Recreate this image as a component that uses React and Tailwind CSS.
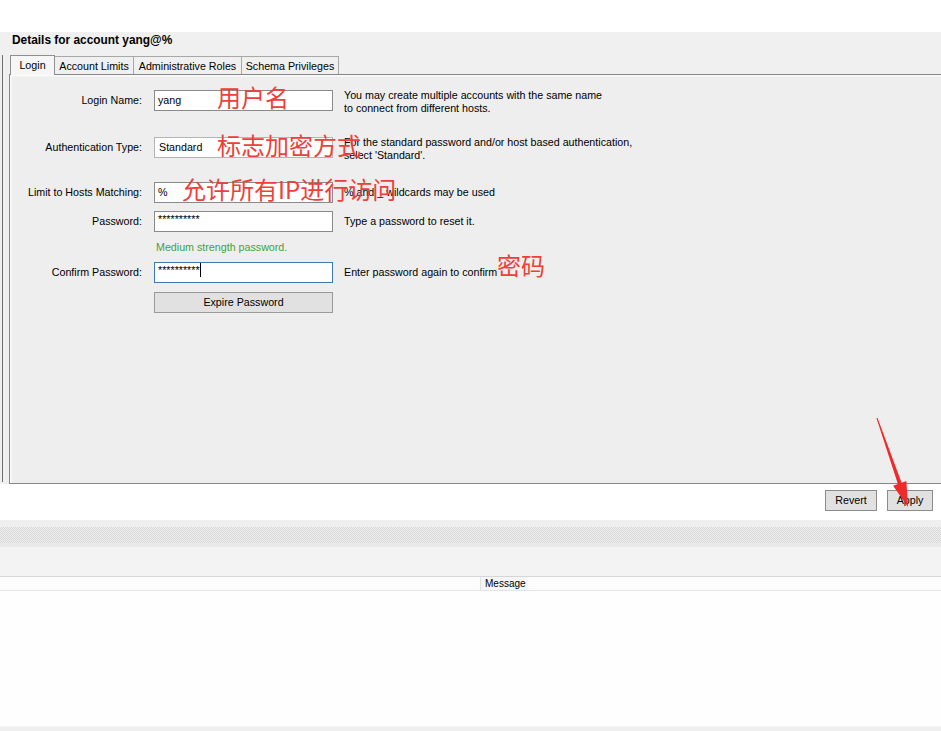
import React from 'react';

const INPUT_BOX = 'ml-[12px] w-[179px] h-[21px] border bg-white px-[3px] flex items-center shrink-0';

function Label({ children }) {
  return <div className="w-[132px] h-[21px] flex items-center justify-end shrink-0">{children}</div>;
}

function Tab({ label, active, width }) {
  if (active) {
    return (
      <div className={`relative z-10 h-[20px] mb-[-1px] ${width} border-t border-l border-r border-[#8f8f8f] bg-[#f6f6f6] flex items-center justify-center`}>
        {label}
      </div>
    );
  }
  return (
    <div className={`h-[18px] ${width} border-t border-r border-[#a8a8a8] bg-[#f0f0f0] flex items-center justify-center pt-px`}>
      {label}
    </div>
  );
}

export default function App() {
  return (
    <div className="relative w-[941px] h-[731px] overflow-hidden bg-white text-[10.7px] text-black font-['Liberation_Sans',Arial,sans-serif] leading-[13px]">
      <div className="h-[32px]" />

      {/* details panel */}
      <div className="h-[452px] bg-[#f0f0f0] flex flex-col">
        <div className="h-[23px] pl-[12px] pt-px font-bold text-[11.9px] leading-[14px]">Details for account yang@%</div>
        <div className="flex flex-1 min-h-0">
          <div className="w-[9px] pl-[2px] pb-[2px]">
            <div className="h-full border-l border-[#6f6f6f]" />
          </div>
          <div className="flex-1 flex flex-col">
            <div className="h-[19px] flex items-end pl-px">
              <Tab label="Login" active width="w-[45px]" />
              <Tab label="Account Limits" width="w-[79px]" />
              <Tab label="Administrative Roles" width="w-[108px]" />
              <Tab label="Schema Privileges" width="w-[97px]" />
            </div>
            <div className="flex-1 border-t border-l border-b border-[#868686] bg-[#eeeeee] shadow-[inset_1px_1px_0_#fbfbfb,inset_2px_2px_0_#f5f5f5]">
              {/* Login Name */}
              <div className="flex items-start h-[21px] mt-[15px]">
                <Label>Login Name:</Label>
                <div className={`${INPUT_BOX} border-[#8a8a8a]`}>yang</div>
                <div className="ml-[11px] mt-[-1px]">
                  <div>You may create multiple accounts with the same name</div>
                  <div>to connect from different hosts.</div>
                </div>
              </div>
              {/* Auth type */}
              <div className="flex items-start h-[21px] mt-[26px]">
                <Label>Authentication Type:</Label>
                <div className={`${INPUT_BOX} border-[#b4b4b4] pl-[4px]`}>Standard</div>
                <div className="ml-[11px] mt-[-1px]">
                  <div>For the standard password and/or host based authentication,</div>
                  <div>select 'Standard'.</div>
                </div>
              </div>
              {/* Hosts */}
              <div className="flex items-center h-[21px] mt-[24px]">
                <Label>Limit to Hosts Matching:</Label>
                <div className={`${INPUT_BOX} border-[#8a8a8a]`}>%</div>
                <div className="ml-[11px]">% and _ wildcards may be used</div>
              </div>
              {/* Password */}
              <div className="flex items-center h-[21px] mt-[8px]">
                <Label>Password:</Label>
                <div className={`${INPUT_BOX} border-[#8a8a8a] items-start pt-px`}>**********</div>
                <div className="ml-[11px]">Type a password to reset it.</div>
              </div>
              <div className="ml-[146px] mt-[8px] h-[14px] leading-[14px] text-[#3ea33e]">Medium strength password.</div>
              {/* Confirm */}
              <div className="flex items-center h-[21px] mt-[8px]">
                <Label>Confirm Password:</Label>
                <div className={`${INPUT_BOX} border-[#3d7ab3] items-start pt-px`}>
                  <span>**********</span>
                  <span className="w-px h-[14px] bg-black mt-[-1px]" />
                </div>
                <div className="ml-[11px]">Enter password again to confirm</div>
              </div>
              <div className="flex mt-[9px]">
                <div className="w-[132px]" />
                <button className="ml-[12px] w-[179px] h-[21px] border border-[#9a9a9a] bg-[#e1e1e1] flex items-center justify-center">
                  Expire Password
                </button>
              </div>
            </div>
          </div>
        </div>
      </div>

      {/* action buttons */}
      <div className="h-[36px] flex justify-end gap-[10px] pr-[8px] pt-[6px]">
        <button className="w-[52px] h-[21px] border border-[#8c8c8c] bg-[#e1e1e1] flex items-center justify-center">Revert</button>
        <button className="w-[46px] h-[21px] border border-[#8c8c8c] bg-[#e1e1e1] flex items-center justify-center">Apply</button>
      </div>

      {/* splitter + output */}
      <div className="h-[7px] bg-[#efefef]" />
      <div className="h-[16px] bg-[repeating-conic-gradient(#d8d8d8_0_25%,#efefef_0_50%)] bg-[length:2px_2px]" />
      <div className="h-[4px] bg-[#e9e9e9]" />
      <div className="h-[29px] bg-[#f3f3f3]" />
      <div className="h-[15px] flex border-t border-b border-t-[#d6d6d6] border-b-[#e4e4e4] bg-[#fcfcfc] text-[10px] leading-[13px]">
        <div className="w-[481px] border-r border-[#e2e2e2]" />
        <div className="w-[47px] pl-[4px] bg-[#f6f6f6]">Message</div>
        <div className="flex-1" />
      </div>
      <div className="h-[135px] bg-[#fefefe]" />
      <div className="h-px bg-[#f4f4f4]" />
      <div className="h-[4px] bg-[#efefef]" />

      {/* red annotations */}
      <div className="absolute left-[217px] top-[85px] text-[24px] leading-none text-[#ee3f3a] font-['Noto_Sans_CJK_SC',sans-serif]">用户名</div>
      <div className="absolute left-[217px] top-[133px] text-[24px] leading-none text-[#ee3f3a] font-['Noto_Sans_CJK_SC',sans-serif]">标志加密方式</div>
      <div className="absolute left-[182px] top-[177px] text-[24px] leading-none text-[#ee3f3a] font-['Noto_Sans_CJK_SC',sans-serif]">允许所有IP进行访问</div>
      <div className="absolute left-[497px] top-[253px] text-[24px] leading-none text-[#ee3f3a] font-['Noto_Sans_CJK_SC',sans-serif]">密码</div>
      <svg className="absolute left-0 top-0" width="941" height="731" viewBox="0 0 941 731">
        <polygon
          points="877.5,417.8 901.6,482.7 906.4,481.1 908,507 893.1,485.7 897.9,484.1 876.5,418.2"
          fill="#ee2a2a"
        />
      </svg>
    </div>
  );
}
